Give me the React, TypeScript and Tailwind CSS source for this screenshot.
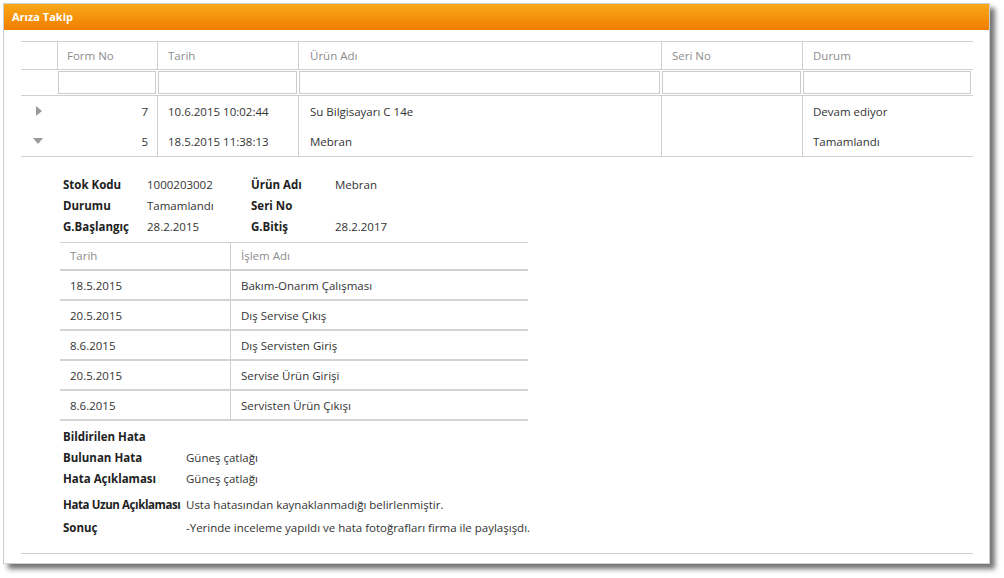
import React from "react";

const font = { fontFamily: '"Open Sans", "Noto Sans", sans-serif' };

const cols = "grid grid-cols-[36px_100px_141px_363px_141px_170px]";

function TriRight() {
  return (
    <svg width="6" height="10" viewBox="0 0 6 10">
      <polygon points="0,0 6,5 0,10" fill="#9a9a9a" />
    </svg>
  );
}
function TriDown() {
  return (
    <svg width="10" height="6" viewBox="0 0 10 6">
      <polygon points="0,0 10,0 5,6" fill="#9a9a9a" />
    </svg>
  );
}

const history = [
  ["18.5.2015", "Bakım-Onarım Çalışması"],
  ["20.5.2015", "Dış Servise Çıkış"],
  ["8.6.2015", "Dış Servisten Giriş"],
  ["20.5.2015", "Servise Ürün Girişi"],
  ["8.6.2015", "Servisten Ürün Çıkışı"],
];

export default function App() {
  return (
    <div className="w-[1004px] h-[578px] bg-white pt-[3px] pl-[3px] text-[11.5px] text-[#333]" style={font}>
      <div className="w-[987px] h-[561px] border border-[#cfcfcf] bg-white shadow-[5px_5px_5px_rgba(0,0,0,0.55)] flex flex-col">
        <div className="h-[26px] bg-gradient-to-b from-[#f9a817] to-[#f07d00] text-white font-bold text-[11px] pl-[8px] flex items-center">
          Arıza Takip
        </div>
        <div className="pl-[17px] pr-[16px] pt-[11px] flex-1 flex flex-col">
          {/* Header row */}
          <div className={`${cols} h-[29px] border-t border-b border-[#d0d0d0] text-[#8c8c8c]`}>
            <div />
            <div className="border-l border-[#d0d0d0] pl-[9px] flex items-center">Form No</div>
            <div className="border-l border-[#d0d0d0] pl-[10px] flex items-center">Tarih</div>
            <div className="border-l border-[#d0d0d0] pl-[11px] flex items-center">Ürün Adı</div>
            <div className="border-l border-[#d0d0d0] pl-[10px] flex items-center">Seri No</div>
            <div className="border-l border-[#d0d0d0] pl-[10px] flex items-center">Durum</div>
          </div>
          {/* Filter row */}
          <div className={`${cols} h-[26px] border-b border-[#d0d0d0] py-[1px]`}>
            <div />
            <div className="px-[1px]"><div className="h-[23px] border border-[#cccccc]" /></div>
            <div className="px-[1px]"><div className="h-[23px] border border-[#cccccc]" /></div>
            <div className="px-[1px]"><div className="h-[23px] border border-[#cccccc]" /></div>
            <div className="px-[1px]"><div className="h-[23px] border border-[#cccccc]" /></div>
            <div className="px-[1px]"><div className="h-[23px] border border-[#cccccc]" /></div>
          </div>
          {/* Data rows */}
          <div className="border-b border-[#d0d0d0]">
            <div className={`${cols} h-[30px]`}>
              <div className="flex items-center pl-[15px]"><TriRight /></div>
              <div className="flex items-center justify-end pr-[9px] pt-[1px]">7</div>
              <div className="border-l border-[#d0d0d0] pl-[10px] pt-[1px] flex items-center">10.6.2015 10:02:44</div>
              <div className="border-l border-[#d0d0d0] pl-[11px] pt-[1px] flex items-center">Su Bilgisayarı C 14e</div>
              <div className="border-l border-[#d0d0d0]" />
              <div className="border-l border-[#d0d0d0] pl-[10px] pt-[1px] flex items-center">Devam ediyor</div>
            </div>
            <div className={`${cols} h-[30px]`}>
              <div className="flex items-center pl-[12px]"><TriDown /></div>
              <div className="flex items-center justify-end pr-[9px] pt-[1px]">5</div>
              <div className="border-l border-[#d0d0d0] pl-[10px] pt-[1px] flex items-center">18.5.2015 11:38:13</div>
              <div className="border-l border-[#d0d0d0] pl-[11px] pt-[1px] flex items-center">Mebran</div>
              <div className="border-l border-[#d0d0d0]" />
              <div className="border-l border-[#d0d0d0] pl-[10px] pt-[1px] flex items-center">Tamamlandı</div>
            </div>
          </div>
          {/* Detail */}
          <div className="pl-[39px] pt-[17px] flex-1 flex flex-col">
            <div className="grid grid-cols-[84px_104px_84px_120px] auto-rows-[21px] pl-[3px] items-center">
              <div className="font-bold text-[#222]">Stok Kodu</div>
              <div>1000203002</div>
              <div className="font-bold text-[#222]">Ürün Adı</div>
              <div>Mebran</div>
              <div className="font-bold text-[#222]">Durumu</div>
              <div>Tamamlandı</div>
              <div className="font-bold text-[#222]">Seri No</div>
              <div />
              <div className="font-bold text-[#222]">G.Başlangıç</div>
              <div>28.2.2015</div>
              <div className="font-bold text-[#222]">G.Bitiş</div>
              <div>28.2.2017</div>
            </div>
            <div className="w-[468px] mt-[5px] border-t border-[#d0d0d0]">
              <div className="grid grid-cols-[170px_298px] h-[28px] border-b-2 border-[#cfcfcf] text-[#8c8c8c]">
                <div className="pl-[10px] flex items-center">Tarih</div>
                <div className="border-l border-[#d0d0d0] pl-[10px] flex items-center">İşlem Adı</div>
              </div>
              {history.map(([d, n], i) => (
                <div key={i} className="grid grid-cols-[170px_298px] h-[30px] border-b-2 border-[#d4d4d4]">
                  <div className="pl-[10px] pt-[1px] flex items-center">{d}</div>
                  <div className="border-l border-[#d0d0d0] pl-[10px] pt-[1px] flex items-center">{n}</div>
                </div>
              ))}
            </div>
            <div className="grid grid-cols-[123px_1fr] pl-[3px] mt-[5px]">
              <div className="h-[21px] flex items-center font-bold text-[#222]">Bildirilen Hata</div>
              <div />
              <div className="h-[21px] flex items-center font-bold text-[#222]">Bulunan Hata</div>
              <div className="h-[21px] flex items-center">Güneş çatlağı</div>
              <div className="h-[21px] flex items-center font-bold text-[#222]">Hata Açıklaması</div>
              <div className="h-[21px] flex items-center">Güneş çatlağı</div>
              <div className="h-[24px] flex items-end font-bold text-[#222] whitespace-nowrap tracking-[-0.4px]">Hata Uzun Açıklaması</div>
              <div className="h-[24px] flex items-end whitespace-nowrap">Usta hatasından kaynaklanmadığı belirlenmiştir.</div>
              <div className="h-[23px] flex items-end font-bold text-[#222]">Sonuç</div>
              <div className="h-[23px] flex items-end whitespace-nowrap">-Yerinde inceleme yapıldı ve hata fotoğrafları firma ile paylaşışdı.</div>
            </div>
          </div>
          <div className="border-t border-[#cfcfcf] mb-[9px]" />
        </div>
      </div>
    </div>
  );
}
